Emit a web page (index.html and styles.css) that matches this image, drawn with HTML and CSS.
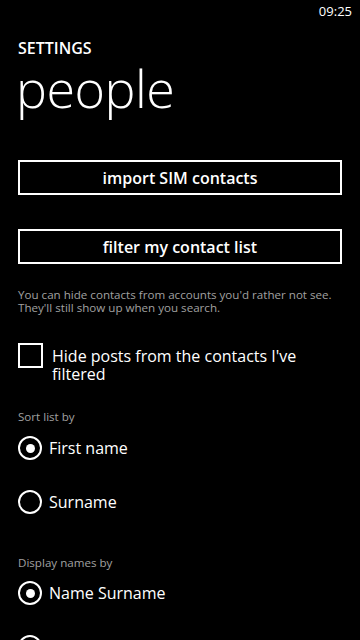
FILE: index.html
```html
<!DOCTYPE html>
<html>
<head>
<meta charset="utf-8">
<link rel="stylesheet" href="styles.css">
</head>
<body>
<div class="phone">
  <div class="status"><span class="clock">09:25</span></div>
  <div class="header">
    <div class="app-title">SETTINGS</div>
    <div class="page-title">people</div>
  </div>
  <div class="content">
    <div class="btn">import SIM contacts</div>
    <div class="btn btn2">filter my contact list</div>
    <p class="help">You can hide contacts from accounts you'd rather not see. They'll still show up when you search.</p>
    <div class="check-row">
      <span class="checkbox"></span>
      <span class="check-label">Hide posts from the contacts I've filtered</span>
    </div>
    <div class="group-label sort-label">Sort list by</div>
    <div class="radio-row first"><span class="radio on"></span><span class="radio-label">First name</span></div>
    <div class="radio-row"><span class="radio"></span><span class="radio-label">Surname</span></div>
    <div class="group-label display-label">Display names by</div>
    <div class="radio-row first-d"><span class="radio on"></span><span class="radio-label">Name Surname</span></div>
    <div class="radio-row"><span class="radio"></span><span class="radio-label">Surname, Name</span></div>
  </div>
</div>
</body>
</html>
```
FILE: styles.css
```css
html, body {
  margin: 0;
  padding: 0;
  background: #000;
}
.phone {
  width: 360px;
  height: 640px;
  overflow: hidden;
  background: #000;
  color: #fff;
  font-family: "Open Sans", "Noto Sans", sans-serif;
}
.status {
  height: 24px;
  display: flex;
  justify-content: flex-end;
  align-items: center;
  padding-right: 8px;
}
.clock {
  font-size: 13px;
  line-height: 13px;
  margin-top: -2px;
}
.header {
  padding-left: 18px;
  padding-top: 14px;
}
.app-title {
  font-size: 16px;
  font-weight: 600;
  line-height: 20px;
}
.page-title {
  font-size: 52px;
  font-weight: 300;
  line-height: 56px;
  margin-top: 2px;
  margin-left: -2px;
  letter-spacing: -0.5px;
}
.content {
  padding: 0 18px;
  margin-top: 44px;
}
.btn {
  box-sizing: border-box;
  height: 35px;
  border: 2.5px solid #fff;
  display: flex;
  align-items: center;
  justify-content: center;
  font-size: 16px;
  font-weight: 600;
}
.btn2 {
  margin-top: 34px;
}
.help {
  margin: 24px 0 0;
  font-size: 11.6px;
  line-height: 13px;
  color: #a0a0a0;
}
.check-row {
  margin-top: 29px;
  display: flex;
  align-items: flex-start;
}
.checkbox {
  box-sizing: border-box;
  flex: none;
  width: 25px;
  height: 25px;
  border: 2.5px solid #fff;
}
.check-label {
  margin-left: 9px;
  font-size: 16px;
  line-height: 18px;
  margin-top: 4px;
}
.group-label {
  font-size: 11.6px;
  line-height: 14px;
  color: #a0a0a0;
}
.sort-label {
  margin-top: 27px;
}
.display-label {
  margin-top: 27px;
}
.radio-row {
  display: flex;
  align-items: center;
  height: 54px;
}
.radio-row.first {
  margin-top: -3px;
}
.radio-row.first-d {
  margin-top: -4px;
}
.radio {
  box-sizing: border-box;
  flex: none;
  width: 24px;
  height: 24px;
  border: 2.5px solid #fff;
  border-radius: 50%;
  display: flex;
  align-items: center;
  justify-content: center;
}
.radio.on::after {
  content: "";
  width: 9px;
  height: 9px;
  border-radius: 50%;
  background: #fff;
}
.radio-label {
  margin-left: 7px;
  font-size: 16px;
}
```
